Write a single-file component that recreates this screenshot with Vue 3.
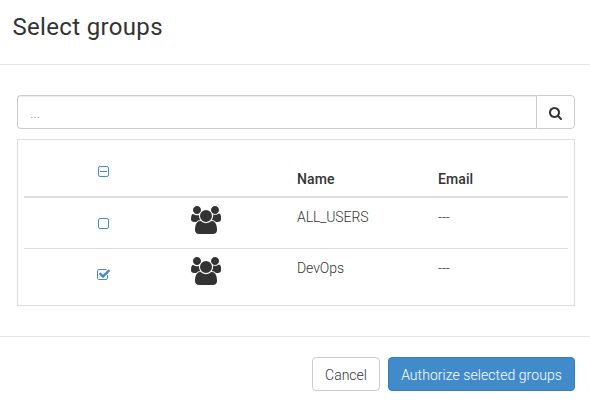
<script setup>
import { ref } from 'vue'

const query = ref('')
const groups = ref([
  { name: 'ALL_USERS', email: '---', selected: false },
  { name: 'DevOps', email: '---', selected: true },
])
</script>

<template>
  <div class="modal">
    <header class="modal-header">
      <h3>Select groups</h3>
    </header>
    <main class="modal-body">
      <div class="search">
        <input v-model="query" type="text" placeholder="..." />
        <button class="search-btn" aria-label="Search">
          <svg class="search-icon" viewBox="64 128 1664 1664"><path d="M1216 832q0-185-131.5-316.5t-316.5-131.5-316.5 131.5-131.5 316.5 131.5 316.5 316.5 131.5 316.5-131.5 131.5-316.5zm512 832q0 52-38 90t-90 38q-54 0-90-38l-343-342q-179 124-399 124-143 0-273.5-55.5t-225-150-150-225-55.5-273.5 55.5-273.5 150-225 225-150 273.5-55.5 273.5 55.5 225 150 150 225 55.5 273.5q0 220-124 399l343 343q37 37 37 90z" /></svg>
        </button>
      </div>
      <div class="panel">
        <div class="row head">
          <div class="cell check">
            <svg class="box" viewBox="0 0 11 11"><rect x=".5" y=".5" width="10" height="10" rx="1.6" /><path d="M2 5.5h7" /></svg>
          </div>
          <div class="cell"></div>
          <div class="cell label">Name</div>
          <div class="cell label">Email</div>
        </div>
        <div v-for="g in groups" :key="g.name" class="row item">
          <div class="cell check" @click="g.selected = !g.selected">
            <svg v-if="g.selected" class="checked" viewBox="64 128 1664 1408"><path d="M1472 930v318q0 119-84.5 203.5t-203.5 84.5h-832q-119 0-203.5-84.5t-84.5-203.5v-832q0-119 84.5-203.5t203.5-84.5h832q63 0 117 25 15 7 18 23 3 17-9 29l-49 49q-10 10-23 10-3 0-9-2-23-6-45-6h-832q-66 0-113 47t-47 113v832q0 66 47 113t113 47h832q66 0 113-47t47-113v-254q0-13 9-22l64-64q10-10 23-10 6 0 12 3 20 8 20 29zm231-489l-814 814q-24 24-57 24t-57-24l-430-430q-24-24-24-57t24-57l110-110q24-24 57-24t57 24l263 263 647-647q24-24 57-24t57 24l110 110q24 24 24 57t-24 57z" /></svg>
            <svg v-else class="box" viewBox="0 0 11 11"><rect x=".5" y=".5" width="10" height="10" rx="1.6" /></svg>
          </div>
          <div class="cell avatar">
            <svg viewBox="-64 0 1920 1792"><path d="M529 896q-162 5-265 128h-134q-82 0-138-40.5t-56-118.5q0-353 124-353 6 0 43.5 21t97.5 42.5 119 21.5q67 0 133-23-5 37-5 66 0 159 93 287zm1071 637q0 120-73 189.5t-194 69.5h-874q-121 0-194-69.5t-73-189.5q0-53 3.5-103.5t14-109 26.5-108.5 43-97.5 62-81 85.5-53.5 111.5-20q10 0 43 21.5t73 48 107 48 135 21.5 135-21.5 107-48 73-48 43-21.5q61 0 111.5 20t85.5 53.5 62 81 43 97.5 26.5 108.5 14 109 3.5 103.5zm-1024-1277q0 106-75 181t-181 75-181-75-75-181 75-181 181-75 181 75 75 181zm704 384q0 159-112.5 271.5t-271.5 112.5-271.5-112.5-112.5-271.5 112.5-271.5 271.5-112.5 271.5 112.5 112.5 271.5zm576 225q0 78-56 118.5t-138 40.5h-134q-103-123-265-128 93-128 93-287 0-29-5-66 66 23 133 23 59 0 119-21.5t97.5-42.5 43.5-21q124 0 124 353zm-128-609q0 106-75 181t-181 75-181-75-75-181 75-181 181-75 181 75 75 181z" /></svg>
          </div>
          <div class="cell text">{{ g.name }}</div>
          <div class="cell text">{{ g.email }}</div>
        </div>
      </div>
    </main>
    <footer class="modal-footer">
      <button class="btn cancel">Cancel</button>
      <button class="btn primary">Authorize selected groups</button>
    </footer>
  </div>
</template>

<style>
body {
  background: #fff;
}
</style>

<style scoped>
.modal,
.modal * {
  box-sizing: border-box;
}
.modal {
  height: 405px;
  font: 300 14px/20px Roboto, sans-serif;
  color: #333;
  background: #fff;
}
.modal-header {
  height: 65px;
  padding: 13px 12.4px 0;
  border-bottom: 1px solid #e5e5e5;
}
h3 {
  margin: 0;
  font-size: 24px;
  line-height: 28px;
  font-weight: 400;
  letter-spacing: 0.34px;
}
.modal-body {
  height: 271px;
  padding: 30px 15px 0 17px;
}
svg {
  display: block;
  fill: currentColor;
}
.search {
  display: flex;
  height: 34px;
}
.search input {
  flex: 1;
  min-width: 0;
  padding: 8px 12px 6px;
  font: inherit;
  color: #555;
  border: 1px solid #ccc;
  border-right: 0;
  border-radius: 4px 0 0 4px;
  box-shadow: inset 0 1px 1px rgba(0, 0, 0, 0.075);
  outline: none;
}
.search input::placeholder {
  color: #999;
  opacity: 1;
}
.search-btn {
  width: 39px;
  padding: 3px 0 0 12px;
  color: #333;
  background: #fff;
  border: 1px solid #ccc;
  border-radius: 0 4px 4px 0;
}
.search-icon {
  width: 13px;
  height: 13px;
}
.panel {
  height: 167px;
  margin-top: 10px;
  padding: 6px;
  border: 1px solid #ddd;
}
.row {
  display: grid;
  grid-template-columns: 159px 106px 141px 1fr;
}
.cell {
  padding: 8px;
}
.head {
  height: 52px;
  border-bottom: 2px solid #ddd;
}
.label {
  padding-top: 23px;
  font-weight: 500;
  letter-spacing: 0.1px;
}
.check {
  display: flex;
  justify-content: center;
  align-items: flex-start;
  color: #428bca;
}
.head .check {
  padding-top: 20px;
}
.item {
  height: 50px;
}
.item + .item {
  height: 51px;
  border-top: 1px solid #ddd;
}
.item .check {
  padding-top: 20px;
}
.item .text {
  padding-top: 9px;
  letter-spacing: -0.08px;
}
.box {
  width: 11px;
  height: 11px;
  fill: none;
  stroke: currentColor;
  stroke-width: 1;
}
.checked {
  width: 13px;
  height: 11px;
}
.avatar svg {
  width: 30px;
  height: 28px;
}
.modal-footer {
  display: flex;
  justify-content: flex-end;
  gap: 8px;
  padding: 20px 15px 0;
  border-top: 1px solid #e5e5e5;
}
.btn {
  height: 34px;
  padding: 2px 0 0;
  font: inherit;
  border: 1px solid #ccc;
  border-radius: 4px;
}
.cancel {
  width: 68px;
  color: #333;
  background: #fff;
}
.primary {
  width: 187px;
  color: #fff;
  background: #428bca;
  border-color: #357ebd;
  letter-spacing: 0.06px;
}
</style>
